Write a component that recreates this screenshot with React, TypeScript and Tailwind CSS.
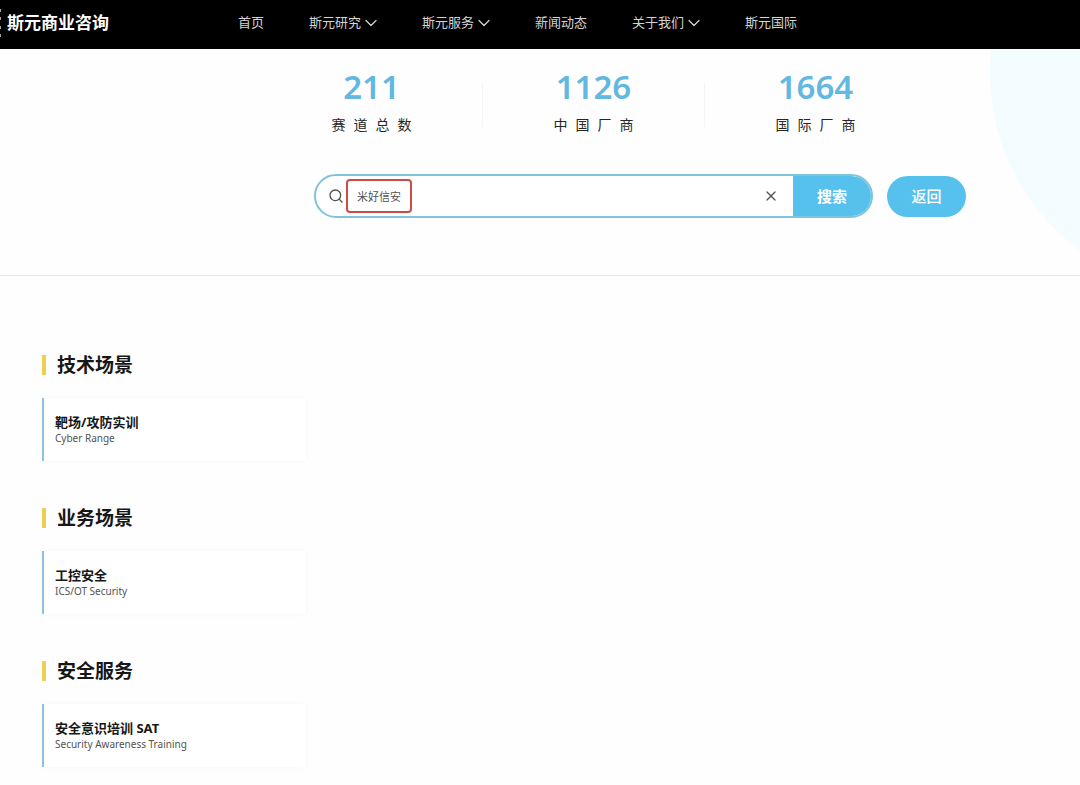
import { useState } from "react";
import { ChevronDown, Search, X } from "lucide-react";

const NAV_LINKS = [
  { href: "#home", label: "首页", menu: false },
  { href: "#research", label: "斯元研究", menu: true },
  { href: "#services", label: "斯元服务", menu: true },
  { href: "#news", label: "新闻动态", menu: false },
  { href: "#about", label: "关于我们", menu: true },
  { href: "#international", label: "斯元国际", menu: false },
];

const STATS = [
  { value: 211, label: "赛道总数" },
  { value: 1126, label: "中国厂商" },
  { value: 1664, label: "国际厂商" },
];

const SECTIONS = [
  { title: "技术场景", items: [{ name: "靶场/攻防实训", english: "Cyber Range" }] },
  { title: "业务场景", items: [{ name: "工控安全", english: "ICS/OT Security" }] },
  { title: "安全服务", items: [{ name: "安全意识培训 SAT", english: "Security Awareness Training" }] },
];

function Header() {
  return (
    <header className="flex h-[49px] items-center bg-black pb-1 text-white">
      <a href="#home" className="flex w-[238px] shrink-0 items-center gap-[5px]">
        <svg width="2" height="28" viewBox="0 0 2 28" fill="#a3a3a3" aria-hidden="true">
          <rect width="1" height="3" />
          <rect y="8" width="1" height="3" />
          <rect y="17" width="1" height="3" />
          <rect y="25" width="1" height="3" />
        </svg>
        <span className="text-[17px] font-bold">斯元商业咨询</span>
      </a>
      <nav className="flex items-center gap-[45px] text-[13px] text-neutral-300">
        {NAV_LINKS.map((link) => (
          <a key={link.href} href={link.href} className="flex items-center whitespace-nowrap">
            {link.label}
            {link.menu && <ChevronDown className="-mr-1 size-5" strokeWidth={1.5} />}
          </a>
        ))}
      </nav>
    </header>
  );
}

function Stats() {
  return (
    <dl className="flex">
      {STATS.map((stat) => (
        <div key={stat.label} className="group flex w-[222px] items-end">
          <div className="flex flex-1 flex-col-reverse items-center gap-2">
            <dt className="pl-2 text-sm leading-5 tracking-[8px] text-neutral-800">{stat.label}</dt>
            <dd className="text-[33px] leading-10 font-semibold text-[#62b8e0]">{stat.value}</dd>
          </div>
          <div className="mb-2 h-11 w-px bg-neutral-100 group-last:bg-transparent" />
        </div>
      ))}
    </dl>
  );
}

function SearchForm() {
  const [query, setQuery] = useState("米好信安");

  return (
    <form className="flex items-center gap-[14px]" onSubmit={(event) => event.preventDefault()}>
      <div className="flex h-11 w-[559px] items-center overflow-hidden rounded-full border-2 border-[#7fc4da] bg-white">
        <Search className="ml-3 size-4 shrink-0 text-neutral-600" strokeWidth={2} />
        <input
          aria-label="搜索"
          value={query}
          onChange={(event) => setQuery(event.target.value)}
          className="ml-[2px] h-[34px] w-[66px] rounded-[4px] border-2 border-[#cf4a42] px-[9px] text-[11px] text-neutral-600 outline-none"
        />
        <button type="button" aria-label="清空" className="mr-[14px] ml-auto text-neutral-600" onClick={() => setQuery("")}>
          <X className="size-4" strokeWidth={2} />
        </button>
        <button type="submit" className="h-full w-[78px] bg-[#56c1ed] text-[15px] font-bold text-white">
          搜索
        </button>
      </div>
      <button type="button" className="h-[41px] w-[79px] rounded-full bg-[#56c1ed] text-[15px] font-medium text-white">
        返回
      </button>
    </form>
  );
}

export default function App() {
  return (
    <div className="min-h-screen bg-[#fefefe] font-['Noto_Sans','Noto_Sans_CJK_SC',sans-serif]">
      <Header />
      <section className="relative overflow-hidden border-b border-neutral-200 pt-[18px] pb-[57px]">
        <div className="absolute -top-[196px] -right-[350px] size-[440px] rounded-full bg-[#f3fcff]" />
        <div className="relative pl-[261px]">
          <Stats />
          <div className="mt-[39px] pl-[53px]">
            <SearchForm />
          </div>
        </div>
      </section>
      <main className="flex flex-col gap-[43px] px-[42px] pt-[75px] pb-[19px]">
        {SECTIONS.map((section) => (
          <section key={section.title}>
            <h2 className="flex items-center gap-[11px] text-[19px] leading-7 font-bold text-neutral-900">
              <span className="h-5 w-1 bg-[#edcf52]" />
              {section.title}
            </h2>
            <ul className="mt-[19px] flex flex-wrap gap-4">
              {section.items.map((item) => (
                <li
                  key={item.name}
                  className="w-[264px] border-l-2 border-[#8cc4e0] bg-white pt-4 pb-[15px] pl-[11px] shadow-[0_0_6px_rgba(0,0,0,0.03)]"
                >
                  <h3 className="text-[13px] leading-4 font-bold text-neutral-900">{item.name}</h3>
                  <p className="text-[10px] leading-4 text-neutral-600">{item.english}</p>
                </li>
              ))}
            </ul>
          </section>
        ))}
      </main>
    </div>
  );
}
